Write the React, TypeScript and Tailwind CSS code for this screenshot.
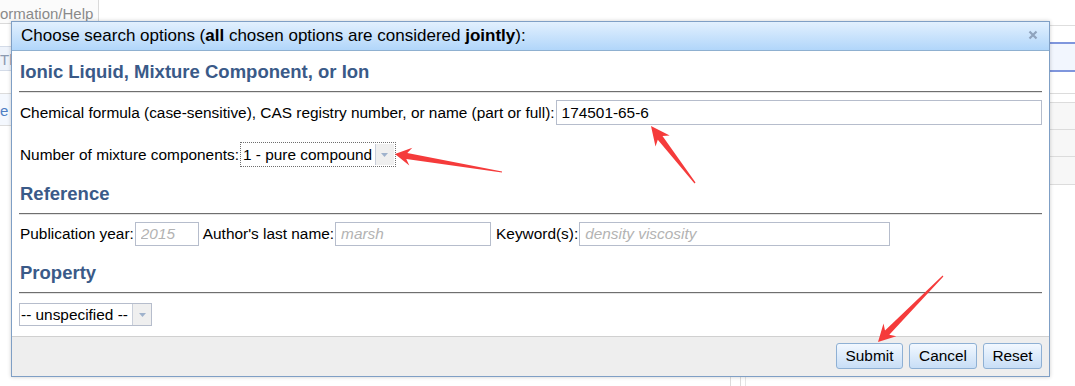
import React from "react";

const FONT = "font-['Liberation_Sans',Arial,sans-serif]";

// red annotation arrow, drawn as one polygon from tail to tip
const arrowPoints = (
  tx: number,
  ty: number,
  px: number,
  py: number,
  headLen = 17,
  headHalf = 9,
  neckHalf = 3,
  tailHalf = 0.6
) => {
  const dx = px - tx;
  const dy = py - ty;
  const len = Math.hypot(dx, dy);
  const ux = dx / len;
  const uy = dy / len;
  const nx = -uy;
  const ny = ux;
  const bx = px - ux * headLen;
  const by = py - uy * headLen;
  const kx = px - ux * (headLen - 4);
  const ky = py - uy * (headLen - 4);
  const pts = [
    [tx + nx * tailHalf, ty + ny * tailHalf],
    [kx + nx * neckHalf, ky + ny * neckHalf],
    [bx + nx * headHalf, by + ny * headHalf],
    [px, py],
    [bx - nx * headHalf, by - ny * headHalf],
    [kx - nx * neckHalf, ky - ny * neckHalf],
    [tx - nx * tailHalf, ty - ny * tailHalf],
  ];
  return pts.map((p) => `${p[0].toFixed(1)},${p[1].toFixed(1)}`).join(" ");
};

const SectionTitle: React.FC<{ children: React.ReactNode }> = ({ children }) => (
  <>
    <h2 className="h-[22px] pl-[1px] text-[18.5px] leading-[22px] font-bold text-[#3a5a88]">
      {children}
    </h2>
    <div className="mt-[8px] h-[2px] border-t border-b border-t-[#6f6f6f] border-b-[#e4e4e4]" />
  </>
);

const ComboArrow: React.FC = () => (
  <div className="flex h-full w-[19px] items-center justify-center border-l border-[#c9cfda] bg-[#efefef]">
    <svg width="7" height="4" viewBox="0 0 7 4">
      <path d="M0 0h7L3.5 4z" fill="#9fb2cc" />
    </svg>
  </div>
);

const TextField: React.FC<{ className?: string; value?: string; placeholder?: string }> = ({
  className = "",
  value,
  placeholder,
}) => (
  <input
    readOnly
    defaultValue={value}
    placeholder={placeholder}
    className={`h-full border border-[#b6bdcc] bg-white pl-[5px] text-[15.4px] text-black outline-none placeholder:italic placeholder:text-[#b3b3b3] ${className}`}
  />
);

const FooterButton: React.FC<{ label: string; w: string }> = ({ label, w }) => (
  <button
    className={`${w} h-[26px] rounded-[3px] border border-[#8eb0d4] bg-gradient-to-b from-[#f2f8ff] to-[#c8def6] text-[15.4px] text-black`}
  >
    {label}
  </button>
);

export default function App() {
  return (
    <div className={`${FONT} relative h-[386px] w-[1075px] overflow-hidden bg-white text-[15.4px] text-black`}>
      {/* page behind the dialog */}
      <div className="absolute left-0 top-0 h-[24px] w-[99px] border-r border-b border-[#dadada] bg-[#fbfbfb]">
        <span className="block whitespace-nowrap pt-[3px] text-[15px] text-[#8a8a8a]">ormation/Help</span>
      </div>
      <div className="absolute left-0 top-[46px] h-[25px] w-[12px] border-y border-[#d3dbe8] bg-[#eef3fb]">
        <span className="block whitespace-nowrap pt-[2px] text-[15px] text-[#8d9bb1]">Th</span>
      </div>
      <div className="absolute left-0 top-[93px] h-[33px] w-[12px] border-y border-[#dcdcdc] bg-[#f4f8fe]">
        <span className="block pt-[6px] text-[15px] text-[#4f7fc4]">e</span>
      </div>

      <div className="absolute right-0 top-[25px] w-[26px]">
        <div className="h-[1px] bg-[#dedede]" />
        <div className="mt-[16px] h-[30px] border-y-2 border-[#7f96dd] bg-[#f2f6fe]" />
        <div className="mt-[21px] h-[10px] border-y border-[#dcdcdc]" />
        <div className="h-[27px] border-b border-[#dcdcdc] bg-[#f7f7f7]" />
        <div className="h-[27px] border-b border-[#dcdcdc] bg-[#f7f7f7]" />
        <div className="h-[28px] border-b border-[#dcdcdc] bg-[#f7f7f7]" />
      </div>

      <div className="absolute left-[730px] top-[376px] h-[10px] w-[1px] bg-[#dcdcdc]" />
      <div className="absolute left-[740px] top-[376px] h-[10px] w-[1px] bg-[#dcdcdc]" />
      <div className="absolute left-[745px] top-[376px] h-[10px] w-[1px] bg-[#e6e6e6]" />

      {/* dialog */}
      <div className="absolute left-[11px] top-[21px] flex h-[356px] w-[1039px] flex-col border border-[#7f9fc5] bg-white shadow-[0_0_4px_rgba(0,0,0,0.2)]">
        <div className="relative flex h-[29px] items-center border-b border-[#8fb0d0] bg-gradient-to-b from-[#e2f0fe] to-[#b1d6fa] pl-[9px] text-[17px]">
          <span>
            Choose search options (<b>all</b> chosen options are considered <b>jointly</b>):
          </span>
          <svg className="absolute right-[11px] top-[8px]" width="10" height="10" viewBox="0 0 10 10">
            <path d="M1.5 1.5l7 7M8.5 1.5l-7 7" stroke="#8fa3bd" strokeWidth="2.2" />
          </svg>
        </div>

        <div className="flex flex-col px-[7px]">
          <div className="mt-[10px]">
            <SectionTitle>Ionic Liquid, Mixture Component, or Ion</SectionTitle>
          </div>

          <div className="mt-[7px] flex h-[25px] items-center">
            <span className="whitespace-nowrap pl-[1px]">
              Chemical formula (case-sensitive), CAS registry number, or name (part or full):
            </span>
            <TextField className="ml-[1px] flex-1" value="174501-65-6" />
          </div>

          <div className="mt-[17px] flex h-[25px] items-center">
            <span className="whitespace-nowrap pl-[1px]">Number of mixture components:</span>
            <div className="ml-[1px] flex h-full w-[156px] items-center border border-dotted border-[#6e6e6e] p-[1px]">
              <span className="flex-1 whitespace-nowrap pl-[1px]">1 - pure compound</span>
              <ComboArrow />
            </div>
          </div>

          <div className="mt-[16px]">
            <SectionTitle>Reference</SectionTitle>
          </div>

          <div className="mt-[7px] flex h-[24px] items-center whitespace-nowrap">
            <span className="pl-[1px]">Publication year:</span>
            <TextField className="ml-[1px] w-[64px]" placeholder="2015" />
            <span className="ml-[4px]">Author's last name:</span>
            <TextField className="ml-[1px] w-[156px]" placeholder="marsh" />
            <span className="ml-[5px]">Keyword(s):</span>
            <TextField className="ml-[1px] w-[311px]" placeholder="density viscosity" />
          </div>

          <div className="mt-[16px]">
            <SectionTitle>Property</SectionTitle>
          </div>

          <div className="mt-[9px] flex h-[23px] w-[133px] items-center border border-[#b6bdcc]">
            <span className="flex-1 whitespace-nowrap pl-[1px]">-- unspecified --</span>
            <ComboArrow />
          </div>
        </div>

        <div className="mt-auto flex h-[40px] items-start justify-end gap-[6px] border-t border-[#d0d0d0] bg-[#eeeeee] pr-[7px] pt-[6px]">
          <FooterButton label="Submit" w="w-[67px]" />
          <FooterButton label="Cancel" w="w-[68px]" />
          <FooterButton label="Reset" w="w-[59px]" />
        </div>
      </div>

      {/* annotation arrows */}
      <svg className="pointer-events-none absolute inset-0" width="1075" height="386">
        <polygon points={arrowPoints(502, 172, 395, 154, 16, 9)} fill="#f53b3b" />
        <polygon points={arrowPoints(695, 183, 651, 126, 19, 9)} fill="#f53b3b" />
        <polygon points={arrowPoints(943, 276, 878, 342, 17, 9)} fill="#f53b3b" />
      </svg>
    </div>
  );
}
